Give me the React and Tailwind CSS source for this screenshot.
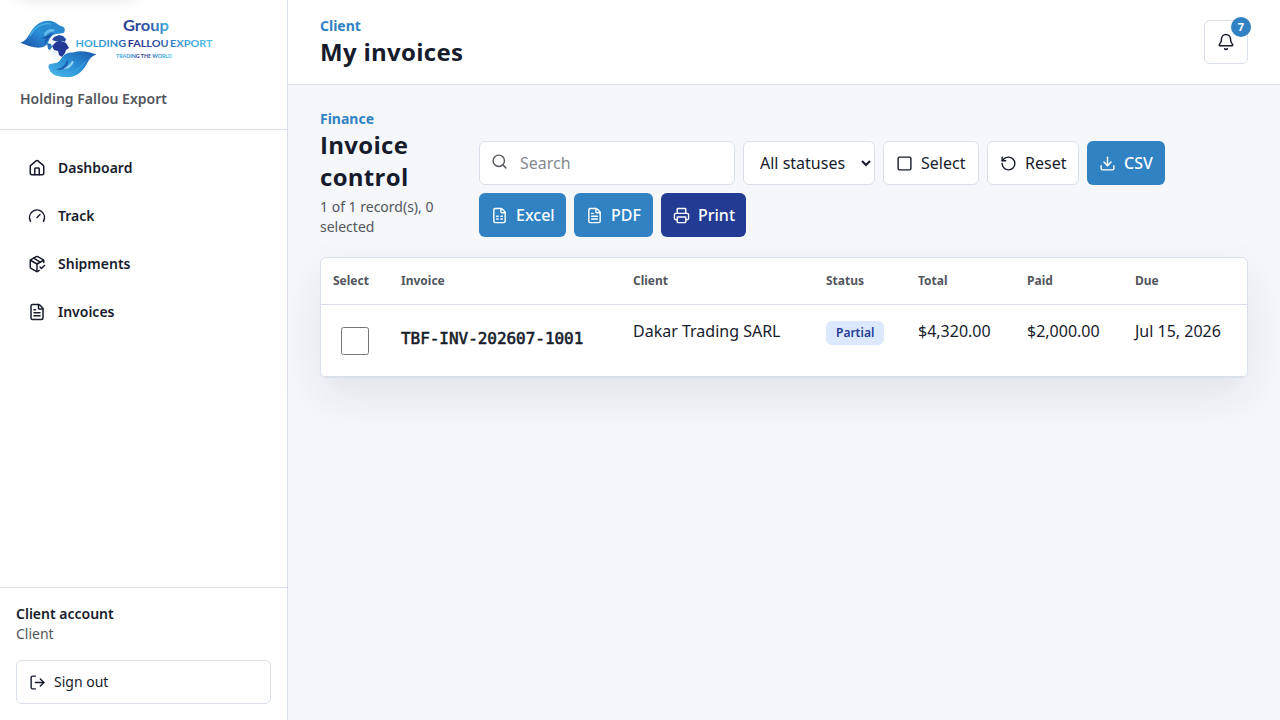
import { useState } from "react";
import {
  Bell,
  Download,
  FileSpreadsheet,
  FileText,
  Gauge,
  House,
  LogOut,
  PackageCheck,
  Printer,
  RotateCcw,
  Search,
  Square,
} from "lucide-react";

const navItems = [
  { label: "Dashboard", icon: House },
  { label: "Track", icon: Gauge },
  { label: "Shipments", icon: PackageCheck },
  { label: "Invoices", icon: FileText },
];

const invoices = [
  {
    id: "TBF-INV-202607-1001",
    client: "Dakar Trading SARL",
    status: "Partial",
    total: "$4,320.00",
    paid: "$2,000.00",
    due: "Jul 15, 2026",
  },
];

function Logo() {
  return (
    <svg
      viewBox="0 0 192 60"
      className="block h-[60px] w-48 overflow-visible"
      role="img"
      aria-label="Group Holding Fallou Export"
    >
      <defs>
        <linearGradient id="handTop" x1="0" y1="1" x2="1" y2="0">
          <stop offset="0" stopColor="#1a50a8" />
          <stop offset="0.5" stopColor="#2a8fd5" />
          <stop offset="1" stopColor="#2a85cd" />
        </linearGradient>
        <linearGradient id="handBottom" x1="0" y1="1" x2="1" y2="0">
          <stop offset="0" stopColor="#4dbcea" />
          <stop offset="0.5" stopColor="#2a8fd5" />
          <stop offset="1" stopColor="#1a57ab" />
        </linearGradient>
        <linearGradient id="groupText">
          <stop offset="0" stopColor="#2c3a93" />
          <stop offset="0.6" stopColor="#3159a8" />
          <stop offset="1" stopColor="#44b8e4" />
        </linearGradient>
        <linearGradient id="nameText">
          <stop offset="0" stopColor="#3fb2e4" />
          <stop offset="0.3" stopColor="#2f86cb" />
          <stop offset="0.4" stopColor="#27348b" />
          <stop offset="0.62" stopColor="#2e57a6" />
          <stop offset="0.74" stopColor="#3190d0" />
          <stop offset="1" stopColor="#50c3ea" />
        </linearGradient>
      </defs>

      {/* globe */}
      <circle cx="39" cy="28" r="11" fill="#f1f8fd" />
      <path d="M34 19l5-2 4 1 3 3-1 3-3-1-3 1-4-1-3-1z" fill="#26489f" />
      <path d="M36 24l5-1 5 2 3 5-3 2-1 3-3 4-3-2-1-4-4-1-2-4 2-2z" fill="#223796" />
      <path d="M27 25l4 1 1 3-2 3-2-1z" fill="#2775c1" />

      {/* hands */}
      <path
        d="M0.5 25C7 22 8 18 12 12C17 5 24 2 31 3C36 4 38 7 41 8C45 9 46 12 43.5 15C39 16 34 15 31 19C28 22 29 26 25 28C19 32 9 28 0.5 25Z"
        fill="url(#handTop)"
      />
      <path d="M24 16c3-5 7-6 11-4-1 2-3 2-5 2-2 1-4 3-5 4-1 0-1-1-1-2z" fill="#66bdec" />
      <path d="M21 20c4 0 7-4 13-5-4 3-6 7-9 11-1-3 1-5 2-6-2 1-4 1-6 0z" fill="#1956a8" />
      <path d="M10 18c4-8 12-14 21-12" fill="none" stroke="#4bb5e8" strokeWidth="1.2" />
      <path
        d="M76.5 36.5C69 39 69 43 65 49C60 56 54 60 45 59C38 59 32 57 29.5 52C28 49 28 47 30 46C34 45 38 46 41 41C44 36 47 34.5 53 34.5C61 32 69 34 76.5 36.5Z"
        fill="url(#handBottom)"
      />
      <path d="M40 50c5 0 9-2 12-7 2 0 2 2 0 4-3 4-7 5-12 3z" fill="#8fd2f3" />
      <path d="M36 51c5 0 9-3 11-9 2 1 1 5-1 7-3 3-7 4-10 2z" fill="#1b60b3" />
      <path d="M65 44c-5 7-12 12-23 12" fill="none" stroke="#3aa5e0" strokeWidth="1.2" />

      <text
        x="103"
        y="13"
        textLength="46"
        lengthAdjust="spacingAndGlyphs"
        fill="url(#groupText)"
        className="font-['Lato'] text-[15px] font-bold"
      >
        Group
      </text>
      <text
        x="55.5"
        y="29"
        textLength="137"
        lengthAdjust="spacingAndGlyphs"
        fill="url(#nameText)"
        className="font-['Lato'] text-[10px] font-bold [word-spacing:-1px]"
      >
        HOLDING FALLOU EXPORT
      </text>
      <text
        x="96"
        y="39.5"
        textLength="56"
        lengthAdjust="spacingAndGlyphs"
        fill="url(#nameText)"
        className="font-['Lato'] text-[5.2px] font-bold"
      >
        TRADING THE WORLD
      </text>
    </svg>
  );
}

function Sidebar() {
  return (
    <aside className="flex h-full w-72 shrink-0 flex-col border-r border-[#d9e0ea] bg-white">
      <div className="h-[130px] border-b border-[#d9e0ea] px-5 pt-[18px]">
        <Logo />
        <p className="mt-[11px] text-sm leading-5 font-semibold text-[#53565d]">Holding Fallou Export</p>
      </div>

      <nav className="flex flex-1 flex-col gap-1 p-4">
        {navItems.map(({ label, icon: Icon }) => (
          <a key={label} href="#" className="flex h-11 items-center gap-3 rounded-md px-3 text-sm font-semibold">
            <Icon size={18} />
            {label}
          </a>
        ))}
      </nav>

      <div className="border-t border-[#d9e0ea] p-4">
        <p className="text-sm font-semibold">Client account</p>
        <p className="text-sm text-[#53565d]">Client</p>
        <button className="mt-4 flex h-11 w-full items-center gap-2 rounded-md border border-[#d9e0ea] px-3 text-sm">
          <LogOut size={17} />
          Sign out
        </button>
      </div>
    </aside>
  );
}

function Header() {
  return (
    <header className="flex h-[85px] items-center justify-between border-b border-[#d9e0ea] bg-white px-8">
      <div>
        <p className="text-sm font-bold text-[#3182c3]">Client</p>
        <h1 className="font-['Open_Sans'] text-2xl leading-8 font-bold tracking-[0.3px]">My invoices</h1>
      </div>
      <button className="relative flex size-11 items-center justify-center rounded-md border border-[#d9e0ea] bg-white">
        <Bell size={18} />
        <span className="absolute -top-1 -right-1 flex size-5 items-center justify-center rounded-full bg-[#3182c3] text-[11px] font-bold text-white">
          7
        </span>
      </button>
    </header>
  );
}

const buttonBase = "flex h-11 items-center gap-2 rounded-md px-3 whitespace-nowrap";
const buttonLight = `${buttonBase} border border-[#d9e0ea] bg-white`;
const buttonBlue = `${buttonBase} bg-[#3182c3] font-medium text-white`;

function Toolbar({ search, setSearch, onReset }) {
  return (
    <div className="flex w-[769px] shrink-0 flex-wrap gap-2">
      <label className="relative block">
        <Search size={17} className="absolute top-3 left-3 text-[#53565d]" />
        <input
          value={search}
          onChange={(e) => setSearch(e.target.value)}
          placeholder="Search"
          className="h-11 w-64 rounded-md border border-[#d9e0ea] bg-white pr-3 pl-10 outline-none placeholder:text-[#858991]"
        />
      </label>
      <select className="h-11 w-[132px] rounded-md border border-[#d9e0ea] bg-white px-3">
        <option>All statuses</option>
        <option>Partial</option>
        <option>Paid</option>
      </select>
      <button className={`${buttonLight} w-24`}>
        <Square size={17} />
        Select
      </button>
      <button className={`${buttonLight} w-[92px]`} onClick={onReset}>
        <RotateCcw size={17} className="shrink-0" />
        Reset
      </button>
      <button className={`${buttonBlue} w-[78px]`}>
        <Download size={17} className="shrink-0" />
        CSV
      </button>
      <button className={`${buttonBlue} w-[87px]`}>
        <FileSpreadsheet size={17} className="shrink-0" />
        Excel
      </button>
      <button className={`${buttonBlue} w-[79px]`}>
        <FileText size={17} className="shrink-0" />
        PDF
      </button>
      <button className={`${buttonBase} w-[85px] bg-[#243b94] font-medium text-white`}>
        <Printer size={17} className="shrink-0" />
        Print
      </button>
    </div>
  );
}

function InvoiceTable({ rows, selected, toggle }) {
  return (
    <div className="mt-5 overflow-hidden rounded-md border border-[#d9e0ea] bg-white shadow-[0_18px_45px_rgba(23,32,51,0.09)]">
      <table className="w-full table-fixed border-separate border-spacing-0 text-left">
        <colgroup>
          <col className="w-[68px]" />
          <col className="w-[232px]" />
          <col className="w-[193px]" />
          <col className="w-[92px]" />
          <col className="w-[109px]" />
          <col className="w-[108px]" />
          <col />
        </colgroup>
        <thead>
          <tr className="text-xs text-[#53565d]">
            {["Select", "Invoice", "Client", "Status", "Total", "Paid", "Due"].map((title) => (
              <th key={title} className="h-[47px] border-b border-[#d9e0ea] px-3 font-bold">
                {title}
              </th>
            ))}
          </tr>
        </thead>
        <tbody className="[&_td]:h-[72px] [&_td]:border-b [&_td]:border-[#d9e0ea]">
          {rows.map((row) => (
            <tr key={row.id} className="align-top">
              <td className="px-3 pt-[22px]">
                <input
                  type="checkbox"
                  checked={selected.includes(row.id)}
                  onChange={() => toggle(row.id)}
                  className="ml-2 block size-7"
                />
              </td>
              <td className="px-3 pt-[22px] font-['DejaVu_Sans_Mono'] tracking-[-0.04px] whitespace-nowrap [-webkit-text-stroke:0.6px_#171c2c]">
                {row.id}
              </td>
              <td className="px-3 pt-[14px]">{row.client}</td>
              <td className="px-3 pt-4">
                <span className="flex h-6 w-fit items-center rounded-md bg-[#dbe8fd] px-2.5 text-xs font-semibold text-[#243b94]">
                  {row.status}
                </span>
              </td>
              <td className="px-3 pt-[14px]">{row.total}</td>
              <td className="px-3 pt-[14px]">{row.paid}</td>
              <td className="px-3 pt-[14px]">{row.due}</td>
            </tr>
          ))}
        </tbody>
      </table>
    </div>
  );
}

export default function App() {
  const [search, setSearch] = useState("");
  const [selected, setSelected] = useState([]);

  const rows = invoices.filter((row) => `${row.id} ${row.client}`.toLowerCase().includes(search.toLowerCase()));

  const toggle = (id) => {
    setSelected((prev) => (prev.includes(id) ? prev.filter((x) => x !== id) : [...prev, id]));
  };

  return (
    <div className="relative flex h-screen overflow-hidden bg-[#f5f7fb] font-['Noto_Sans',sans-serif] text-[#171c2c]">
      <Sidebar />
      {/* parked just above the page, only its shadow shows */}
      <div className="absolute -top-[52px] left-4 h-11 w-[123px] rounded-md bg-white shadow-lg" />
      <div className="min-w-0 flex-1">
        <Header />
        <main className="px-8 pt-6">
          <div className="flex items-end justify-between">
            <div className="w-[140px]">
              <p className="text-sm font-bold text-[#3182c3]">Finance</p>
              <h2 className="font-['Open_Sans'] text-2xl leading-8 font-bold tracking-[0.3px]">Invoice control</h2>
              <p className="mt-1 text-sm text-[#53565d]">
                {rows.length} of {invoices.length} record(s), {selected.length} selected
              </p>
            </div>
            <Toolbar
              search={search}
              setSearch={setSearch}
              onReset={() => {
                setSearch("");
                setSelected([]);
              }}
            />
          </div>
          <InvoiceTable rows={rows} selected={selected} toggle={toggle} />
        </main>
      </div>
    </div>
  );
}
